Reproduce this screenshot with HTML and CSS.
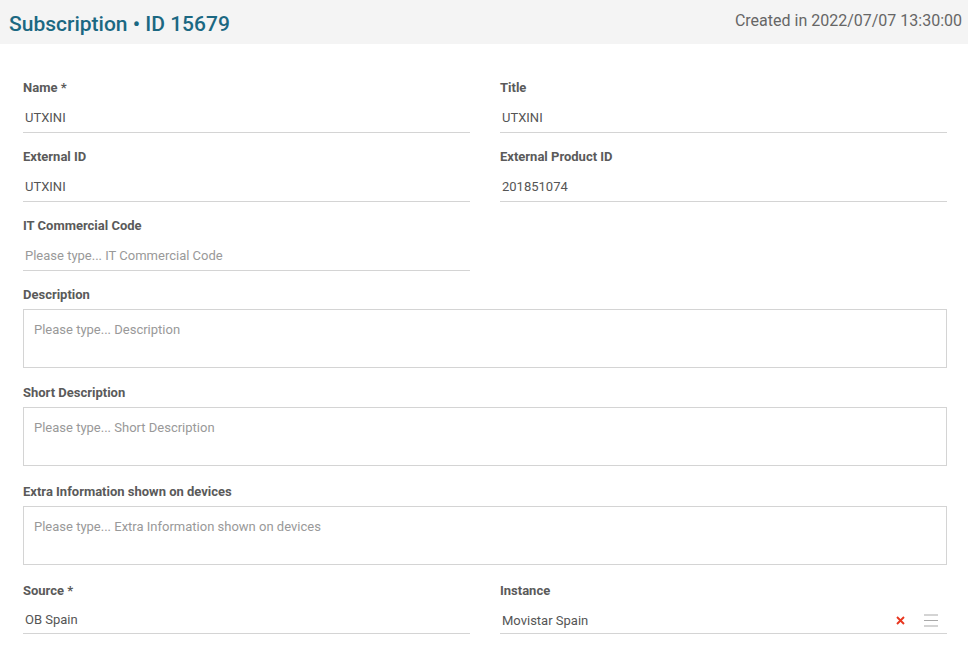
FILE: index.html
```html
<!DOCTYPE html>
<html>
<head>
<meta charset="utf-8">
<link rel="stylesheet" href="styles.css">
</head>
<body>
<header class="topbar">
  <h1 class="title">Subscription • ID 15679</h1>
  <div class="created">Created in 2022/07/07 13:30:00</div>
</header>
<main class="form">
  <div class="field">
    <div class="label">Name *</div>
    <div class="input">UTXINI</div>
  </div>
  <div class="field">
    <div class="label">Title</div>
    <div class="input">UTXINI</div>
  </div>
  <div class="field">
    <div class="label">External ID</div>
    <div class="input">UTXINI</div>
  </div>
  <div class="field">
    <div class="label">External Product ID</div>
    <div class="input">201851074</div>
  </div>
  <div class="field">
    <div class="label">IT Commercial Code</div>
    <div class="input placeholder">Please type... IT Commercial Code</div>
  </div>
  <div class="field"></div>
  <div class="field wide area-field">
    <div class="label">Description</div>
    <div class="textarea">Please type... Description</div>
  </div>
  <div class="field wide area-field spaced">
    <div class="label">Short Description</div>
    <div class="textarea">Please type... Short Description</div>
  </div>
  <div class="field wide area-field spaced">
    <div class="label">Extra Information shown on devices</div>
    <div class="textarea">Please type... Extra Information shown on devices</div>
  </div>
  <div class="field compact">
    <div class="label">Source *</div>
    <div class="input">OB Spain</div>
  </div>
  <div class="field compact">
    <div class="label">Instance</div>
    <div class="input select">
      <span class="select-value">Movistar Spain</span>
      <span class="clear">
        <svg width="9" height="9" viewBox="0 0 9 9"><path d="M1 1 L8 8 M8 1 L1 8" stroke="#e8361f" stroke-width="1.9" stroke-linecap="butt"/></svg>
      </span>
      <span class="menu">
        <svg width="14" height="13" viewBox="0 0 14 13"><path d="M0 1 H14 M0 6.5 H14 M0 12 H14" stroke="#a9a9a9" stroke-width="1.2"/></svg>
      </span>
    </div>
  </div>
</main>
</body>
</html>
```
FILE: styles.css
```css
* { box-sizing: border-box; }
body {
  margin: 0;
  font-family: Roboto, "Liberation Sans", sans-serif;
  background: #ffffff;
  color: #555;
}
.topbar {
  height: 44px;
  background: #f4f4f4;
  display: flex;
  align-items: center;
  justify-content: space-between;
  padding: 0 6px 0 9px;
}
.title {
  margin: 0;
  padding-top: 3px;
  font-size: 21px;
  font-weight: 500;
  color: #1b6882;
}
.created {
  padding-bottom: 4px;
  font-size: 16px;
  color: #666;
}
.form {
  display: grid;
  grid-template-columns: 1fr 1fr;
  column-gap: 30px;
  row-gap: 14px;
  padding: 34px 21px 0 23px;
}
.field.wide { grid-column: 1 / span 2; }
.label {
  font-size: 13px;
  font-weight: 700;
  line-height: 20px;
  color: #5a5a5a;
  margin-bottom: 7px;
}
.input {
  height: 28px;
  border-bottom: 1px solid #d4d4d4;
  font-size: 13px;
  line-height: 26px;
  padding-left: 2px;
  color: #555;
}
.compact .label { margin-bottom: 6px; }
.compact .input { height: 27px; line-height: 25px; }
.placeholder { color: #999; }
.area-field { margin-bottom: 1px; }
.area-field.spaced { margin-bottom: 2px; }
.area-field .label { margin-bottom: 4px; }
.textarea {
  height: 59px;
  border: 1px solid #d4d4d4;
  padding: 11px 10px;
  font-size: 13px;
  line-height: 18px;
  color: #999;
}
.select {
  display: flex;
  align-items: center;
}
.select-value { flex: 1; }
.clear {
  display: flex;
  width: 9px;
  margin-right: 19px;
}
.menu {
  display: flex;
  margin-right: 9px;
}
```
